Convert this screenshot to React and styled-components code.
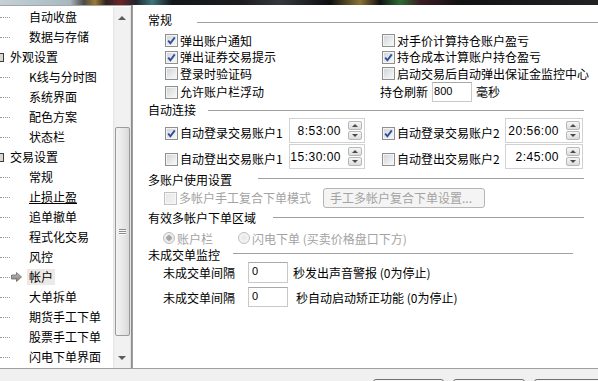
import React from "react";
import styled, { createGlobalStyle } from "styled-components";

const GlobalStyle = createGlobalStyle`
  html, body {
    margin: 0;
    padding: 0;
  }
  body {
    width: 598px;
    height: 381px;
    overflow: hidden;
    font-family: "Noto Sans CJK SC", "Liberation Sans", sans-serif;
    font-size: 12px;
    color: #000;
  }
`;

const treeItems = [
  { label: "自动收盘", child: true },
  { label: "数据与存储", child: true },
  { label: "外观设置" },
  { label: "K线与分时图", child: true },
  { label: "系统界面", child: true },
  { label: "配色方案", child: true },
  { label: "状态栏", child: true },
  { label: "交易设置" },
  { label: "常规", child: true },
  { label: "止损止盈", child: true, hover: true },
  { label: "追单撤单", child: true },
  { label: "程式化交易", child: true },
  { label: "风控", child: true },
  { label: "帐户", child: true, selected: true },
  { label: "大单拆单", child: true },
  { label: "期货手工下单", child: true },
  { label: "股票手工下单", child: true },
  { label: "闪电下单界面", child: true },
];

const CheckBox = ({ checked, disabled }) => (
  <Box $disabled={disabled}>
    {checked && (
      <svg width="9" height="9" viewBox="0 0 9 9">
        <path d="M1.2 4.6 L3.4 7.2 L7.8 1.4" fill="none" stroke="#2f4f9e" strokeWidth="1.9" />
      </svg>
    )}
  </Box>
);

const Spinner = () => (
  <SpinWrap>
    <SpinHalf>
      <Tri $up />
    </SpinHalf>
    <SpinHalf>
      <Tri />
    </SpinHalf>
  </SpinWrap>
);

const PointerArrow = () => (
  <svg width="11" height="10" viewBox="0 0 11 10">
    <defs>
      <linearGradient id="arw" x1="0" y1="0" x2="0" y2="1">
        <stop offset="0" stopColor="#c9c4be" />
        <stop offset="1" stopColor="#7d7873" />
      </linearGradient>
    </defs>
    <path d="M0.5 3 H5.5 V0.5 L10.5 5 L5.5 9.5 V7 H0.5 Z" fill="url(#arw)" stroke="#6f6a66" strokeWidth="0.8" />
  </svg>
);

const App = () => {
  return (
    <>
      <GlobalStyle />
      <Window>
        <TopStrip />
        <Body>
          <TreePanel>
            <TreeList>
              {treeItems.map((item) => (
                <TreeRow key={item.label}>
                  {item.child ? (
                    <>
                      <Dots />
                      <ArrowSlot>{item.selected && <PointerArrow />}</ArrowSlot>
                    </>
                  ) : (
                    <ExpandBox />
                  )}
                  <TreeLabel $selected={item.selected} $hover={item.hover}>
                    {item.label}
                  </TreeLabel>
                </TreeRow>
              ))}
            </TreeList>
            <ScrollBar>
              <ScrollBtn $h={22}>
                <Tri $up $big />
              </ScrollBtn>
              <ScrollGap $h={98} />
              <Thumb>
                <Grip />
                <Grip />
                <Grip />
              </Thumb>
              <ScrollGap $flex />
              <ScrollBtn $h={20}>
                <Tri $big />
              </ScrollBtn>
            </ScrollBar>
          </TreePanel>

          <Content>
            <SectionHeader $mt={0}>
              常规
              <Rule $gap={25} $y={2} />
            </SectionHeader>
            <GeneralGrid>
              <CheckItem>
                <CheckBox checked />
                弹出账户通知
              </CheckItem>
              <CheckItem>
                <CheckBox />
                对手价计算持仓账户盈亏
              </CheckItem>
              <CheckItem>
                <CheckBox checked />
                弹出证券交易提示
              </CheckItem>
              <CheckItem>
                <CheckBox checked />
                持仓成本计算账户持仓盈亏
              </CheckItem>
              <CheckItem>
                <CheckBox />
                登录时验证码
              </CheckItem>
              <CheckItem>
                <CheckBox />
                启动交易后自动弹出保证金监控中心
              </CheckItem>
              <CheckItem>
                <CheckBox />
                允许账户栏浮动
              </CheckItem>
              <RefreshRow>
                持仓刷新
                <NumberInput $w={40} $h={20}>800</NumberInput>
                毫秒
              </RefreshRow>
            </GeneralGrid>

            <SectionHeader $mr={15}>
              自动连接
              <Rule $gap={12} />
            </SectionHeader>
            <AutoRow $mt={0}>
              <AutoCell>
                <CheckItem $w={124} $shift>
                  <CheckBox checked />
                  自动登录交易账户1
                </CheckItem>
                <TimeBox $w={76}>
                  <TimeText>8:53:00</TimeText>
                  <Spinner />
                </TimeBox>
              </AutoCell>
              <AutoCell>
                <CheckItem $w={123} $shift>
                  <CheckBox checked />
                  自动登录交易账户2
                </CheckItem>
                <TimeBox $w={78}>
                  <TimeText>20:56:00</TimeText>
                  <Spinner />
                </TimeBox>
              </AutoCell>
            </AutoRow>
            <AutoRow $mt={1}>
              <AutoCell>
                <CheckItem $w={124} $shift>
                  <CheckBox />
                  自动登出交易账户1
                </CheckItem>
                <TimeBox $w={76}>
                  <TimeText>15:30:00</TimeText>
                  <Spinner />
                </TimeBox>
              </AutoCell>
              <AutoCell>
                <CheckItem $w={123} $shift>
                  <CheckBox />
                  自动登出交易账户2
                </CheckItem>
                <TimeBox $w={78}>
                  <TimeText>2:45:00</TimeText>
                  <Spinner />
                </TimeBox>
              </AutoCell>
            </AutoRow>

            <SectionHeader $mt={3} $mr={15}>
              多账户使用设置
              <Rule $gap={26} $y={-2} />
            </SectionHeader>
            <MultiRow>
              <CheckItem $w={159} $disabled>
                <CheckBox disabled />
                多帐户手工复合下单模式
              </CheckItem>
              <GhostButton>手工多帐户复合下单设置...</GhostButton>
            </MultiRow>

            <SectionHeader $mt={2} $mr={15}>
              有效多帐户下单区域
              <Rule $gap={17} $y={-1} />
            </SectionHeader>
            <RadioRow>
              <RadioItem $w={75}>
                <Radio $on />
                账户栏
              </RadioItem>
              <RadioItem>
                <Radio />
                闪电下单 (买卖价格盘口下方)
              </RadioItem>
            </RadioRow>

            <SectionHeader $mt={1} $h={14} $mr={26}>
              未成交单监控
              <Rule $gap={13} $y={-2} />
            </SectionHeader>
            <MonitorRow $h={21} $mt={0}>
              <MonitorLabel>未成交单间隔</MonitorLabel>
              <NumberInput $w={40} $h={21} $pad={3}>0</NumberInput>
              <MonitorNote $gap={5}>秒发出声音警报 (0为停止)</MonitorNote>
            </MonitorRow>
            <MonitorRow $h={20} $mt={4}>
              <MonitorLabel>未成交单间隔</MonitorLabel>
              <NumberInput $w={40} $h={20} $pad={3}>0</NumberInput>
              <MonitorNote $gap={8}>秒自动启动矫正功能 (0为停止)</MonitorNote>
            </MonitorRow>
          </Content>
        </Body>
        <Footer>
          <FooterButton $w={71} />
          <FooterButton $w={72} />
          <FooterButton $w={72} />
        </Footer>
      </Window>
    </>
  );
};

const Window = styled.div`
  width: 598px;
  height: 381px;
  display: flex;
  flex-direction: column;
  background: #f0f0f0;
  overflow: hidden;
`;

const TopStrip = styled.div`
  height: 5px;
  flex: none;
  background: linear-gradient(
    90deg,
    #c4d2d8 0,
    #a9b8bf 70px,
    #4a4a48 84px,
    #9a7a36 95px,
    #2c2222 106px,
    #6e2426 120px,
    #1f262c 136px,
    #3f7478 152px,
    #12171b 172px,
    #1c1c1e 240px,
    #34383c 280px,
    #0e0e10 330px,
    #8a7236 360px,
    #121212 380px,
    #2e6a34 400px,
    #3c1c22 420px,
    #121214 460px,
    #222224 598px
  );
`;

const Body = styled.div`
  height: 364px;
  flex: none;
  display: flex;
  background: #fff;
`;

const TreePanel = styled.div`
  width: 132px;
  flex: none;
  display: flex;
  box-sizing: border-box;
  padding-top: 1px;
  border-top: 1px solid #a6a6a6;
  border-right: 1px solid #8c8c8c;
  border-bottom: 1px solid #a0a0a0;
  background: #fff;
`;

const TreeList = styled.div`
  width: 113px;
  flex: none;
  display: flex;
  flex-direction: column;
  overflow: hidden;
`;

const TreeRow = styled.div`
  height: 20px;
  flex: none;
  display: flex;
  align-items: center;
  white-space: nowrap;
`;

const Dots = styled.div`
  width: 10px;
  flex: none;
  height: 0;
  border-top: 1px dotted #9a9a9a;
`;

const ArrowSlot = styled.div`
  width: 17px;
  flex: none;
  display: flex;
  align-items: center;
  padding-left: 1px;
  box-sizing: border-box;
`;

const ExpandBox = styled.div`
  width: 4px;
  height: 9px;
  flex: none;
  margin-right: 4px;
  box-sizing: border-box;
  border: 1px solid #3c3c3c;
  border-left: none;
  background: #d8d8d0;
`;

const TreeLabel = styled.span`
  padding: 0 2px;
  line-height: 16px;
  background: ${(p) => (p.$selected ? "#ece9e6" : "transparent")};
  text-decoration: ${(p) => (p.$hover ? "underline" : "none")};
`;

const ScrollBar = styled.div`
  width: 18px;
  flex: none;
  display: flex;
  flex-direction: column;
  align-items: center;
  background: linear-gradient(90deg, #e2e2e2 0, #f1f1f1 2px, #f1f1f1 16px, #e2e2e2 18px);
`;

const ScrollBtn = styled.div`
  height: ${(p) => p.$h}px;
  flex: none;
  width: 100%;
  display: flex;
  align-items: center;
  justify-content: center;
`;

const ScrollGap = styled.div`
  flex: ${(p) => (p.$flex ? "1" : "none")};
  height: ${(p) => (p.$h ? `${p.$h}px` : "auto")};
`;

const Thumb = styled.div`
  width: 15px;
  height: 209px;
  flex: none;
  box-sizing: border-box;
  border: 1px solid #9b9b9b;
  border-radius: 2px;
  background: linear-gradient(90deg, #f3f3f3, #e6e6e6 60%, #d9d9d9);
  display: flex;
  flex-direction: column;
  align-items: center;
  justify-content: center;
  gap: 1px;
`;

const Grip = styled.div`
  width: 7px;
  height: 1px;
  background: #8a8a8a;
  box-shadow: 0 1px 0 #fafafa;
`;

const Tri = styled.div`
  width: 0;
  height: 0;
  border-left: ${(p) => (p.$big ? 4 : 3)}px solid transparent;
  border-right: ${(p) => (p.$big ? 4 : 3)}px solid transparent;
  ${(p) =>
    p.$up
      ? `border-bottom: ${p.$big ? 4 : 3}px solid ${p.$big ? "#5c5c5c" : "#4a4a4a"};`
      : `border-top: ${p.$big ? 4 : 3}px solid ${p.$big ? "#5c5c5c" : "#4a4a4a"};`}
`;

const Content = styled.div`
  flex: 1;
  display: flex;
  flex-direction: column;
  box-sizing: border-box;
  padding: 7px 0 0 15px;
  border-left: 1px solid #a0a0a0;
  border-bottom: 1px solid #a0a0a0;
  background: #fff;
  white-space: nowrap;
`;

const SectionHeader = styled.div`
  height: ${(p) => p.$h || 16}px;
  flex: none;
  display: flex;
  align-items: center;
  margin-top: ${(p) => p.$mt || 0}px;
  margin-right: ${(p) => p.$mr || 0}px;
  line-height: 16px;
`;

const Rule = styled.div`
  flex: 1;
  height: 0;
  margin-left: ${(p) => p.$gap}px;
  margin-top: ${(p) => (p.$y || 0) * 2}px;
  border-top: 1px solid #a0a0a0;
`;

const GeneralGrid = styled.div`
  display: grid;
  grid-template-columns: 217px auto;
  grid-template-rows: 17px 16px 17px 20px;
  grid-auto-flow: row;
  align-items: center;
  margin: 4px 0 0 17px;
`;

const CheckItem = styled.div`
  display: flex;
  align-items: center;
  gap: 2px;
  width: ${(p) => (p.$w ? `${p.$w}px` : "auto")};
  flex: none;
  line-height: 16px;
  margin-top: ${(p) => (p.$shift ? 5 : 0)}px;
  color: ${(p) => (p.$disabled ? "#a3a3a3" : "#000")};
`;

const Box = styled.span`
  width: 13px;
  height: 13px;
  flex: none;
  box-sizing: border-box;
  display: flex;
  align-items: center;
  justify-content: center;
  border: 1px solid ${(p) => (p.$disabled ? "#c2c2c2" : "#8e8f8f")};
  background: ${(p) =>
    p.$disabled
      ? "linear-gradient(135deg, #e6e6e6, #f4f4f4)"
      : "linear-gradient(135deg, #cfd2d6, #eeeff0 70%, #f7f7f7)"};
  box-shadow: inset 0 0 0 1px ${(p) => (p.$disabled ? "#f6f6f6" : "#f4f4f4")};
`;

const RefreshRow = styled.div`
  display: flex;
  align-items: center;
  gap: 4px;
  margin-left: -2px;
  line-height: 16px;
`;

const NumberInput = styled.div`
  width: ${(p) => p.$w}px;
  height: ${(p) => p.$h}px;
  flex: none;
  box-sizing: border-box;
  border: 1px solid #c9c9c9;
  border-top-color: #a9a9a9;
  background: #fff;
  padding: 2px 0 0 ${(p) => p.$pad || 1}px;
  font-family: "Liberation Sans", sans-serif;
  font-size: 11px;
  line-height: 12px;
`;

const AutoRow = styled.div`
  height: 25px;
  flex: none;
  display: flex;
  margin: ${(p) => p.$mt}px 0 0 17px;
`;

const AutoCell = styled.div`
  width: 217px;
  flex: none;
  display: flex;
  align-items: center;
`;

const TimeBox = styled.div`
  width: ${(p) => p.$w}px;
  height: 25px;
  flex: none;
  box-sizing: border-box;
  display: flex;
  align-items: center;
  justify-content: flex-end;
  padding-right: 2px;
  border: 1px solid #d2d2d2;
  background: #fff;
`;

const TimeText = styled.span`
  font-family: "Liberation Sans", sans-serif;
  font-size: 12px;
  letter-spacing: 0.5px;
  margin-right: 7px;
`;

const SpinWrap = styled.div`
  width: 14px;
  height: 19px;
  display: flex;
  flex-direction: column;
  gap: 1px;
`;

const SpinHalf = styled.div`
  flex: 1;
  box-sizing: border-box;
  display: flex;
  align-items: center;
  justify-content: center;
  border: 1px solid #b7b7b7;
  border-radius: 2px;
  background: linear-gradient(180deg, #f6f6f6, #dcdcdc);
`;

const MultiRow = styled.div`
  height: 20px;
  flex: none;
  display: flex;
  align-items: center;
  margin-left: 16px;
`;

const GhostButton = styled.div`
  width: 162px;
  height: 20px;
  box-sizing: border-box;
  flex: none;
  padding-left: 6px;
  border: 1px solid #b5b5b5;
  border-radius: 3px;
  background: #f4f4f4;
  color: #a3a3a3;
  line-height: 18px;
`;

const RadioRow = styled.div`
  height: 18px;
  flex: none;
  display: flex;
  align-items: center;
  margin: 3px 0 0 15px;
`;

const RadioItem = styled.div`
  display: flex;
  align-items: center;
  gap: 2px;
  width: ${(p) => (p.$w ? `${p.$w}px` : "auto")};
  flex: none;
  color: #a3a3a3;
`;

const Radio = styled.span`
  width: 12px;
  height: 12px;
  flex: none;
  box-sizing: border-box;
  border-radius: 50%;
  border: 1px solid #bdbdbd;
  background: radial-gradient(circle, ${(p) => (p.$on ? "#a8a8a8 0 2.5px, #ececec 3px" : "#e6e6e6 0, #f6f6f6 5px")});
`;

const MonitorRow = styled.div`
  height: ${(p) => p.$h}px;
  flex: none;
  display: flex;
  align-items: center;
  margin: ${(p) => p.$mt}px 0 0 15px;
`;

const MonitorLabel = styled.span`
  width: 85px;
  flex: none;
`;

const MonitorNote = styled.span`
  margin-left: ${(p) => p.$gap}px;
`;

const Footer = styled.div`
  flex: 1;
  display: flex;
  gap: 9px;
  padding: 10px 0 0 373px;
  background: #f0f0f0;
`;

const FooterButton = styled.div`
  width: ${(p) => p.$w}px;
  height: 22px;
  flex: none;
  box-sizing: border-box;
  border: 1px solid #707070;
  border-radius: 3px;
  background: linear-gradient(180deg, #f6f6f6, #e8e8e8);
`;

export default App;
